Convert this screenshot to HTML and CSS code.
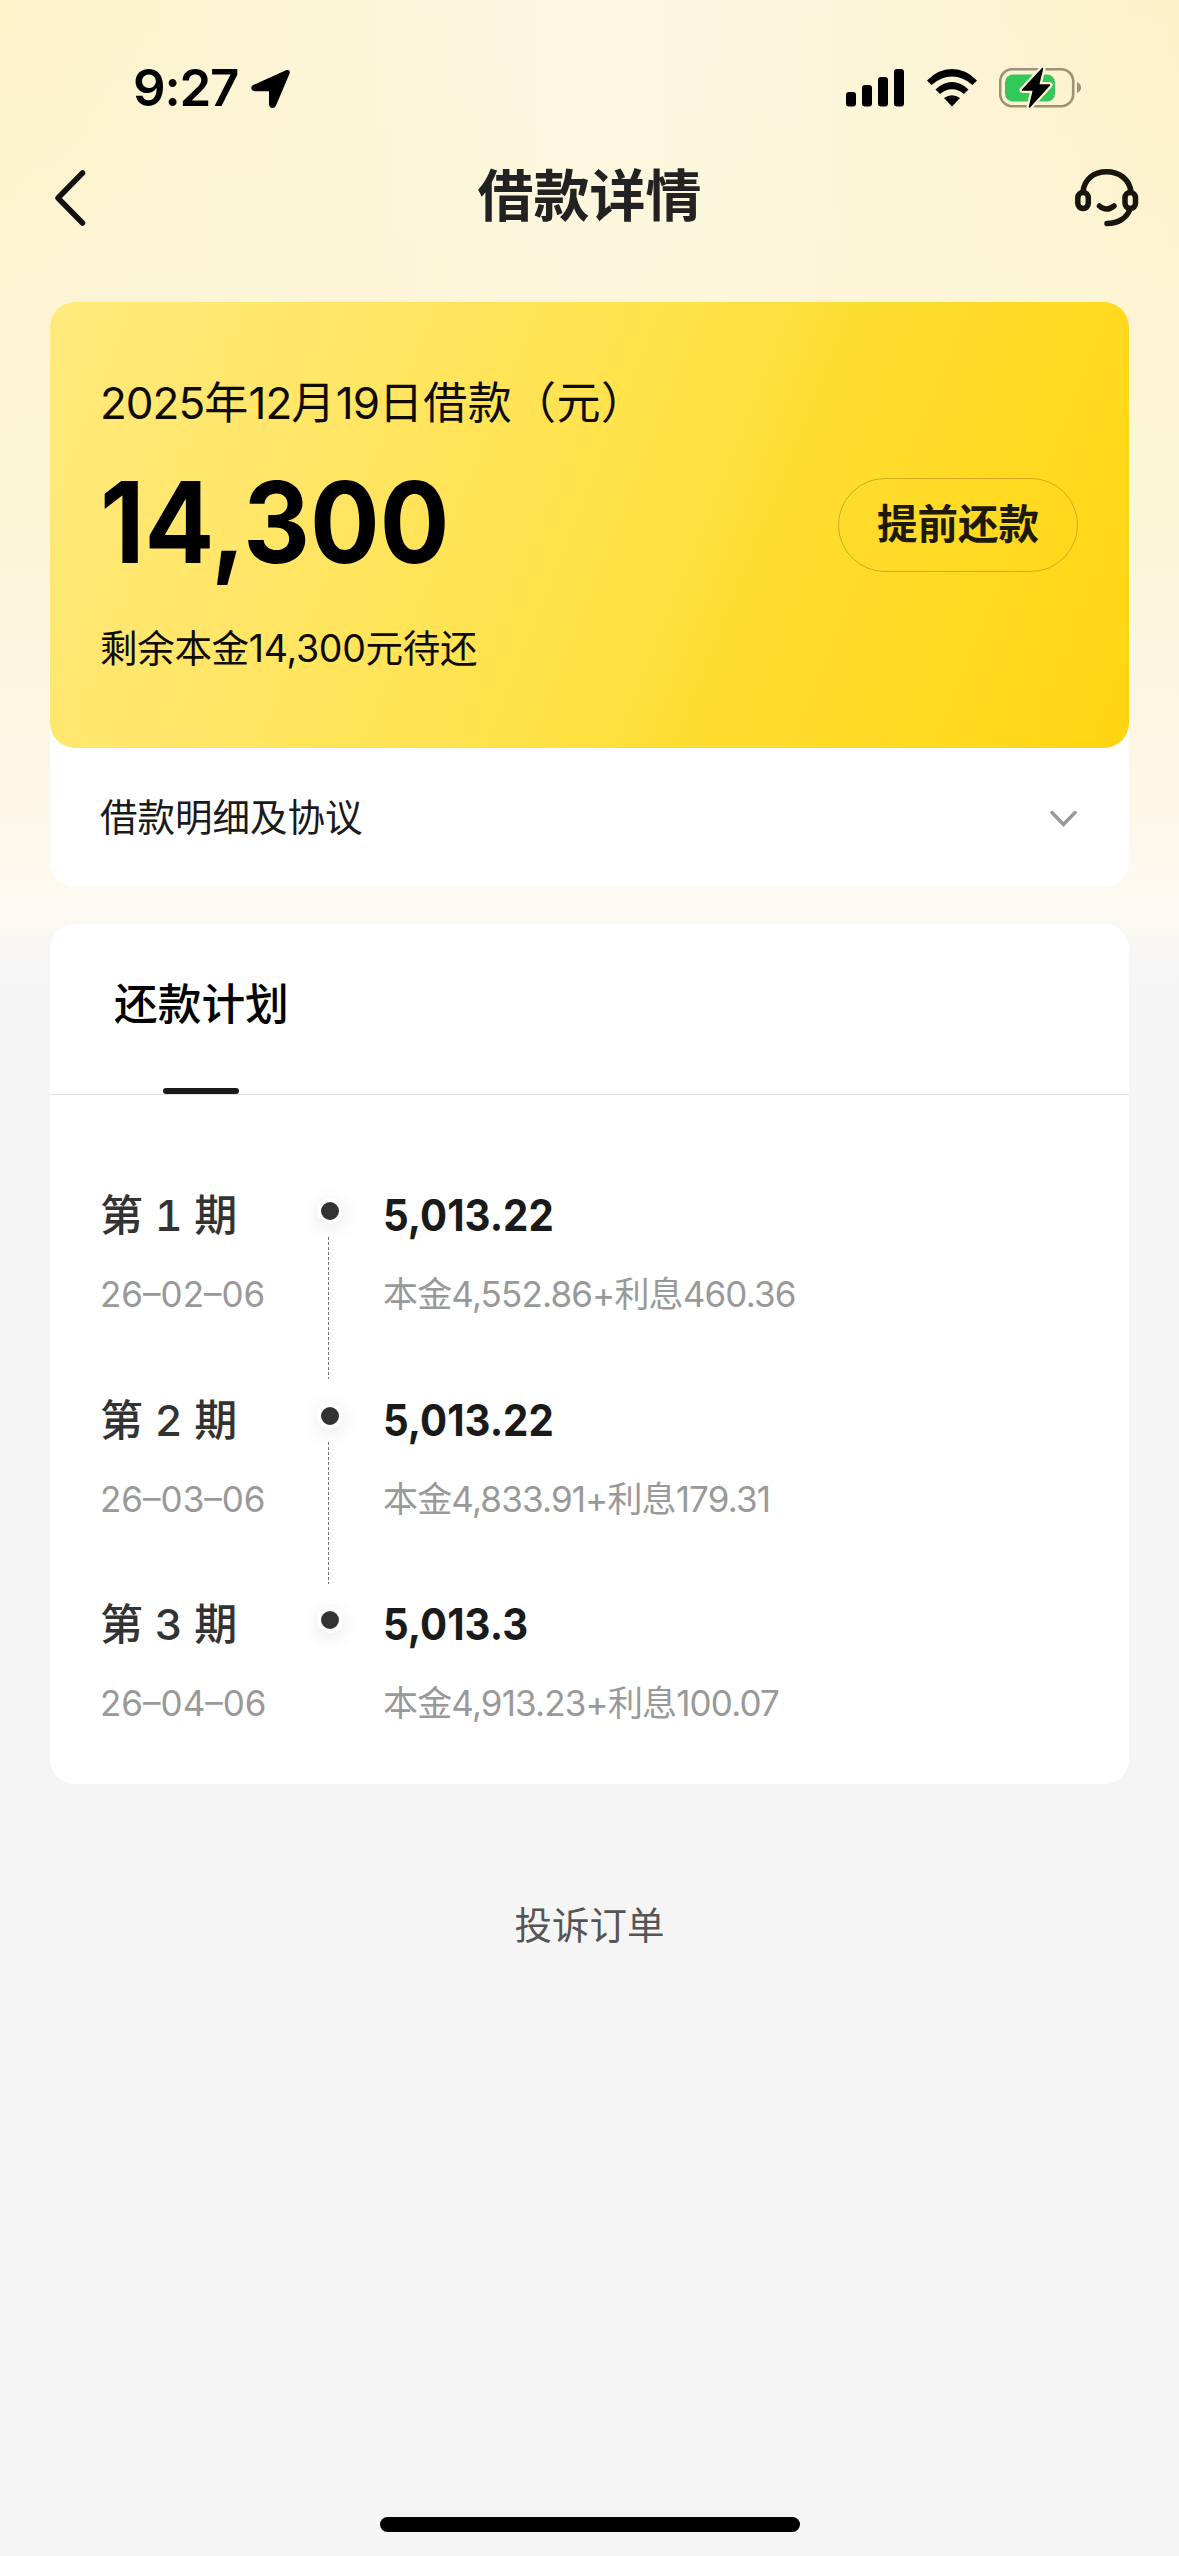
FILE: index.html
```html
<!DOCTYPE html>
<html lang="zh-CN">
<head>
<meta charset="utf-8">
<title>借款详情</title>
<link rel="stylesheet" href="styles.css">
</head>
<body>
<div class="screen">
  <div class="status">
    <div class="status-left">
      <span class="time">9:27</span>
      <svg class="loc" width="39" height="40" viewBox="0 0 39 40"><path d="M35.5 1.1Q39.6.2 38.6 4.4L24.8 37Q23.4 39.6 20.8 39T18 35.5V22.2H3.5Q.6 21.8.2 19.6T2.2 16Z"/></svg>
    </div>
    <div class="status-right">
      <svg width="58" height="38" viewBox="0 0 58 38"><rect x="0" y="23" width="10" height="14.5" rx="3"/><rect x="16" y="16" width="10" height="21.500" rx="3"/><rect x="32" y="8" width="10" height="29.500" rx="3"/><rect x="48" y="0" width="10" height="37.500" rx="3"/></svg>
      <svg class="wifi" width="50" height="38" viewBox="0 0 50 38"><path d="M0 11.500Q11 0 25 0T50 11.500L45.500 16Q36 7.500 25 7.500T4.500 16ZM8.500 20.500Q16 13 25 13T41.500 20.500L37 25Q31.500 20.200 25 20.200T13 25ZM17 29Q25 23.500 33 29L25 37.500Z"/></svg>
      <svg class="battery" width="84" height="42" viewBox="0 0 84 42"><rect x="1.200" y="2.200" width="73" height="37" rx="12" fill="none" stroke="#9b9278" stroke-width="2.600"/><path d="M78 15Q82 17 82 20.500T78 26Z" fill="#9b9278"/><rect x="6" y="7.500" width="50" height="27" rx="8" fill="#34c759"/><path d="M43.500 1.500 23.500 23H34.500L30.500 40 50.500 18H39.500Z" fill="#000" stroke="#fdf4d2" stroke-width="6" stroke-linejoin="round" paint-order="stroke"/><path d="M43.500 1.500 23.500 23H34.500L30.500 40 50.500 18H39.500Z" stroke="#000" stroke-width="1.500" stroke-linejoin="round"/></svg>
    </div>
  </div>
  <header class="nav">
    <svg width="34" height="58" viewBox="0 0 34 58" fill="none" stroke="#111" stroke-width="5.500" stroke-linecap="round" stroke-linejoin="round"><path d="M28.500 4 4 29 28.500 54"/></svg>
    <h1>借款详情</h1>
    <svg width="64" height="58" viewBox="0 0 64 58" fill="none" stroke="#18150c" stroke-width="5.500" stroke-linecap="round"><rect x="2.800" y="23.500" width="10.500" height="16" rx="5.200"/><rect x="50" y="23.500" width="10.500" height="16" rx="5.200"/><path d="M8 23C9 10 19 2.800 31.500 2.800S54.500 10 56 23M55 40C52 49 43 54.500 32 54.500M24.500 37Q31.500 43 39 37"/></svg>
  </header>
  <main>
    <section class="loan">
      <div class="hero">
        <div class="hero-info">
          <p class="hero-title"><span class="num">2025</span>年<span class="num">12</span>月<span class="num">19</span>日借款（元）</p>
          <p class="amount"><span>14,300</span></p>
          <p class="remain">剩余本金14,300元待还</p>
        </div>
        <button class="repay">提前还款</button>
      </div>
      <div class="detail">
        <span>借款明细及协议</span>
        <svg width="27" height="18" viewBox="0 0 27 18" fill="none" stroke="#999" stroke-width="3.500" stroke-linecap="round"><path d="M2 2.500 13.500 14.500 25 2.500"/></svg>
      </div>
    </section>
    <section class="plan">
      <div class="tabs"><h2>还款计划</h2></div>
      <ol>
        <li><div class="term"><b>第 1 期</b><time>26–02–06</time></div><div class="rail"><i></i></div><div class="sum"><strong>5,013.22</strong><span>本金4,552.86+利息460.36</span></div></li>
        <li><div class="term"><b>第 2 期</b><time>26–03–06</time></div><div class="rail"><i></i></div><div class="sum"><strong>5,013.22</strong><span>本金4,833.91+利息179.31</span></div></li>
        <li><div class="term"><b>第 3 期</b><time>26–04–06</time></div><div class="rail"><i></i></div><div class="sum"><strong>5,013.3</strong><span>本金4,913.23+利息100.07</span></div></li>
      </ol>
    </section>
  </main>
  <a class="complain">投诉订单</a>
  <div class="home"></div>
</div>
</body>
</html>
```
FILE: styles.css
```css
* { box-sizing: border-box; margin: 0; padding: 0; }
body {
  background: #f5f5f5;
  font-family: Inter, "Noto Sans CJK SC", sans-serif;
  color: #1a1a1a;
}
svg { display: block; flex: none; }
.screen {
  width: 1179px;
  height: 2556px;
  display: flex;
  flex-direction: column;
  background:
    linear-gradient(180deg, rgba(252,246,220,0) 0, rgba(252,246,216,.65) 300px, #fcf5d8 520px, #fcf7e4 740px, #fdf9ee 880px, #fcf9f2 925px, #f6f6f5 960px, #f5f5f5 1020px),
    linear-gradient(90deg, #fdf1c9 0, #fcf5d6 300px, #fcf7e4 600px, #fcf5d8 900px, #fdf0c8 100%);
}
.status {
  height: 150px;
  padding: 67px 96px 0 133px;
  display: flex;
  justify-content: space-between;
  align-items: flex-start;
  color: #000;
}
.status-left, .status-right { display: flex; }
.time { width: 118px; font-size: 51px; font-weight: 600; line-height: 42px; letter-spacing: -1.2px; }
.loc { margin-top: 2px; }
.status-right svg { margin-top: 2px; }
.status-right .wifi { margin-left: 23px; }
.status-right .battery { margin: 0 0 0 22px; }
.nav {
  height: 96px;
  padding: 0 40px 0 54px;
  display: flex;
  justify-content: space-between;
  align-items: center;
}
.nav h1 { font-size: 56px; line-height: 80px; font-weight: 700; color: #222; margin: -4px 0 0 16px; }
main { padding: 56px 50px 0; display: flex; flex-direction: column; gap: 37px; }
.loan, .plan { background: #fff; border-radius: 25px; }
.hero {
  height: 446px;
  padding: 0 51px 0 50px;
  border-radius: 25px;
  display: flex;
  justify-content: space-between;
  background: linear-gradient(112deg, #ffea7c 0, #ffe668 24%, #ffe24a 50%, #fedd30 66%, #ffd91e 86%, #ffd511 100%);
  color: #0d0b02;
}
.hero-info { padding-top: 71px; }
.hero-title { font-size: 44px; line-height: 60px; letter-spacing: .4px; white-space: nowrap; }
.num { letter-spacing: -1px; }
.amount { height: 120px; margin-top: 29px; color: #000; }
.amount span { display: inline-block; font-size: 113px; line-height: 120px; font-weight: 700; transform: scaleX(.915); transform-origin: left; }
.remain { margin-top: 40px; font-size: 37.500px; line-height: 54px; letter-spacing: -.3px; }
.repay {
  width: 240px;
  height: 94px;
  margin-top: 176px;
  border: 1px solid #cfab1a;
  border-radius: 47px;
  background: none;
  font: 700 40.500px/60px Inter, "Noto Sans CJK SC", sans-serif;
  color: #1f1a08;
}
.detail {
  height: 139px;
  padding: 0 52px 0 50px;
  display: flex;
  justify-content: space-between;
  align-items: center;
  font-size: 37.500px;
}
.detail span { margin-top: -6px; }
.detail svg { margin-top: 3px; }
.plan { height: 860px; }
.tabs { height: 171px; padding: 51px 64px 0; border-bottom: 1px solid #dedede; position: relative; }
.tabs h2 { font-size: 43.700px; line-height: 60px; font-weight: 500; color: #000; }
.tabs::after { content: ""; position: absolute; left: 113px; bottom: 0; width: 76px; height: 6px; border-radius: 3px; background: #1a1a1a; }
ol { list-style: none; padding: 90px 50px 0; }
li { height: 204.500px; display: grid; grid-template-columns: 211px 72px 1fr; }
.term, .sum { display: flex; flex-direction: column; gap: 19px; }
.term b { font-size: 43px; line-height: 60px; font-weight: 500; font-variant-numeric: tabular-nums; letter-spacing: .1px; color: #333; }
time, .sum span { font-size: 35px; line-height: 60px; font-weight: 400; color: #999; white-space: nowrap; }
.sum span { letter-spacing: -.85px; }
.sum strong { font-size: 43.500px; line-height: 60px; font-weight: 700; transform: scaleX(.925); transform-origin: left; color: #1a1a1a; }
.rail { display: flex; flex-direction: column; align-items: flex-start; padding: 13px 0 0 6px; }
.rail i { width: 26px; height: 26px; border: 4px solid #fff; border-radius: 50%; background: #333; box-shadow: 0 4px 18px rgba(60,80,100,.13); }
.rail::after { content: ""; width: 1px; height: 142px; margin: 13px 0 0 11px; background: repeating-linear-gradient(#777 0 3px, transparent 3px 5px); }
li:last-child .rail::after { display: none; }
.complain { margin-top: 112px; text-align: center; font-size: 37.500px; line-height: 60px; color: #555; }
.home { width: 420px; height: 15px; margin: auto auto 24px; border-radius: 8px; background: #000; }
```
